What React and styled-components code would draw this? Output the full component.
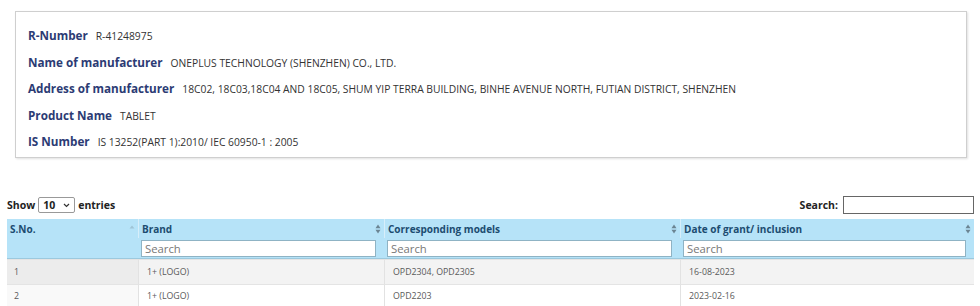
import React from "react";
import styled, { createGlobalStyle } from "styled-components";

const Global = createGlobalStyle`
  body {
    margin: 0;
    background: #fff;
    font-family: "Open Sans", "Liberation Sans", sans-serif;
  }
`;

const Page = styled.div`
  width: 980px;
  height: 306px;
  overflow: hidden;
  padding-top: 11px;
  box-sizing: border-box;
`;

const Card = styled.div`
  margin: 0 13px 0 15px;
  height: 147px;
  box-sizing: border-box;
  border: 1px solid #cfcfcf;
  box-shadow: 1px 1px 2px rgba(0, 0, 0, 0.12);
  padding: 12px 0 0 12px;
  display: flex;
  flex-direction: column;
`;

const InfoRow = styled.div`
  line-height: 20px;
  height: 20px;
  margin-bottom: 6.6px;
  white-space: nowrap;
`;

const Label = styled.span`
  font-size: 11.7px;
  font-weight: 700;
  color: #2c3b74;
  margin-right: 8px;
`;

const Value = styled.span`
  font-size: 10.3px;
  color: #333;
`;

const Controls = styled.div`
  display: flex;
  justify-content: space-between;
  align-items: center;
  margin: 37px 6px 0 7px;
  height: 20px;
`;

const Length = styled.label`
  display: flex;
  align-items: center;
  font-size: 10.5px;
  font-weight: 700;
  color: #222;
  gap: 3px;
`;

const Select = styled.div`
  width: 37px;
  height: 16px;
  box-sizing: border-box;
  border: 1px solid #999;
  border-radius: 2px;
  display: flex;
  align-items: center;
  justify-content: space-between;
  padding: 0 4px;
  font-size: 10.5px;
  font-weight: 700;
  color: #222;
`;

const SearchBox = styled.label`
  display: flex;
  align-items: center;
  gap: 5px;
  font-size: 10.5px;
  font-weight: 700;
  color: #222;
`;

const TopInput = styled.div`
  width: 131px;
  height: 18px;
  box-sizing: border-box;
  border: 1px solid #666;
  background: #fff;
`;

const Table = styled.div`
  margin: 4px 6px 0 7px;
  display: grid;
  grid-template-columns: 131px 246px 296px 294px;
`;

const Head = styled.div`
  background: #b6e3f8;
  height: 19px;
  display: flex;
  align-items: center;
  justify-content: space-between;
  padding: 0 3px;
  font-size: 10px;
  font-weight: 700;
  color: #1c4c70;
  border-left: ${(p) => (p.first ? "none" : "1px solid #d7eefa")};
  box-sizing: border-box;
`;

const FilterCell = styled.div`
  background: #b6e3f8;
  height: 21px;
  padding: 2px 8px 2px 3px;
  box-sizing: border-box;
  border-bottom: 1px solid #9cc9de;
`;

const FilterInput = styled.div`
  height: 17px;
  box-sizing: border-box;
  border: 1px solid #8fb3c4;
  background: #fff;
  font-size: 11.3px;
  color: #777;
  padding-left: 3px;
  display: flex;
  align-items: center;
`;

const Cell = styled.div`
  height: ${(p) => (p.last ? "23px" : "25px")};
  box-sizing: border-box;
  display: flex;
  align-items: center;
  padding-left: ${(p) => (p.first ? "7px" : "8px")};
  font-size: 8.8px;
  color: #5a5a5a;
  background: ${(p) =>
    p.odd ? (p.sorted ? "#ececec" : "#f3f3f3") : p.sorted ? "#f9f9f9" : "#fff"};
  border-top: 1px solid #e4e4e4;
  border-left: ${(p) => (p.first ? "none" : "1px solid #e2e2e2")};
`;

const SortIcon = ({ up }) => (
  <svg width="6" height="10" viewBox="0 0 6 10">
    {up ? (
      <path d="M3 1.5 L5.5 4.5 L0.5 4.5 Z" fill="#9fc4d6" />
    ) : (
      <>
        <path d="M3 0.5 L5.5 4.3 L0.5 4.3 Z" fill="#6b8593" />
        <path d="M3 9.5 L5.5 5.7 L0.5 5.7 Z" fill="#6b8593" />
      </>
    )}
  </svg>
);

const info = [
  ["R-Number", "R-41248975"],
  ["Name of manufacturer", "ONEPLUS TECHNOLOGY (SHENZHEN) CO., LTD."],
  [
    "Address of manufacturer",
    "18C02, 18C03,18C04 AND 18C05, SHUM YIP TERRA BUILDING, BINHE AVENUE NORTH, FUTIAN DISTRICT, SHENZHEN",
  ],
  ["Product Name", "TABLET"],
  ["IS Number", "IS 13252(PART 1):2010/ IEC 60950-1 : 2005"],
];

const rows = [
  ["1", "1+ (LOGO)", "OPD2304, OPD2305", "16-08-2023"],
  ["2", "1+ (LOGO)", "OPD2203", "2023-02-16"],
];

const heads = ["S.No.", "Brand", "Corresponding models", "Date of grant/ inclusion"];

export default function App() {
  return (
    <Page>
      <Global />
      <Card>
        {info.map(([l, v]) => (
          <InfoRow key={l}>
            <Label>{l}</Label>
            <Value>{v}</Value>
          </InfoRow>
        ))}
      </Card>
      <Controls>
        <Length>
          Show
          <Select>
            <span>10</span>
            <svg width="7" height="5" viewBox="0 0 7 5">
              <path d="M1 1 L3.5 3.5 L6 1" stroke="#333" strokeWidth="1.2" fill="none" />
            </svg>
          </Select>
          entries
        </Length>
        <SearchBox>
          Search:
          <TopInput />
        </SearchBox>
      </Controls>
      <Table>
        {heads.map((h, i) => (
          <Head key={h} first={i === 0}>
            <span>{h}</span>
            <SortIcon up={i === 0} />
          </Head>
        ))}
        {heads.map((h, i) => (
          <FilterCell key={"f" + h}>
            {i > 0 && <FilterInput>Search</FilterInput>}
          </FilterCell>
        ))}
        {rows.map((r, ri) =>
          r.map((c, ci) => (
            <Cell
              key={ri + "-" + ci}
              odd={ri % 2 === 0}
              sorted={ci === 0}
              first={ci === 0}
              last={ri === rows.length - 1}
            >
              {c}
            </Cell>
          ))
        )}
      </Table>
    </Page>
  );
}
